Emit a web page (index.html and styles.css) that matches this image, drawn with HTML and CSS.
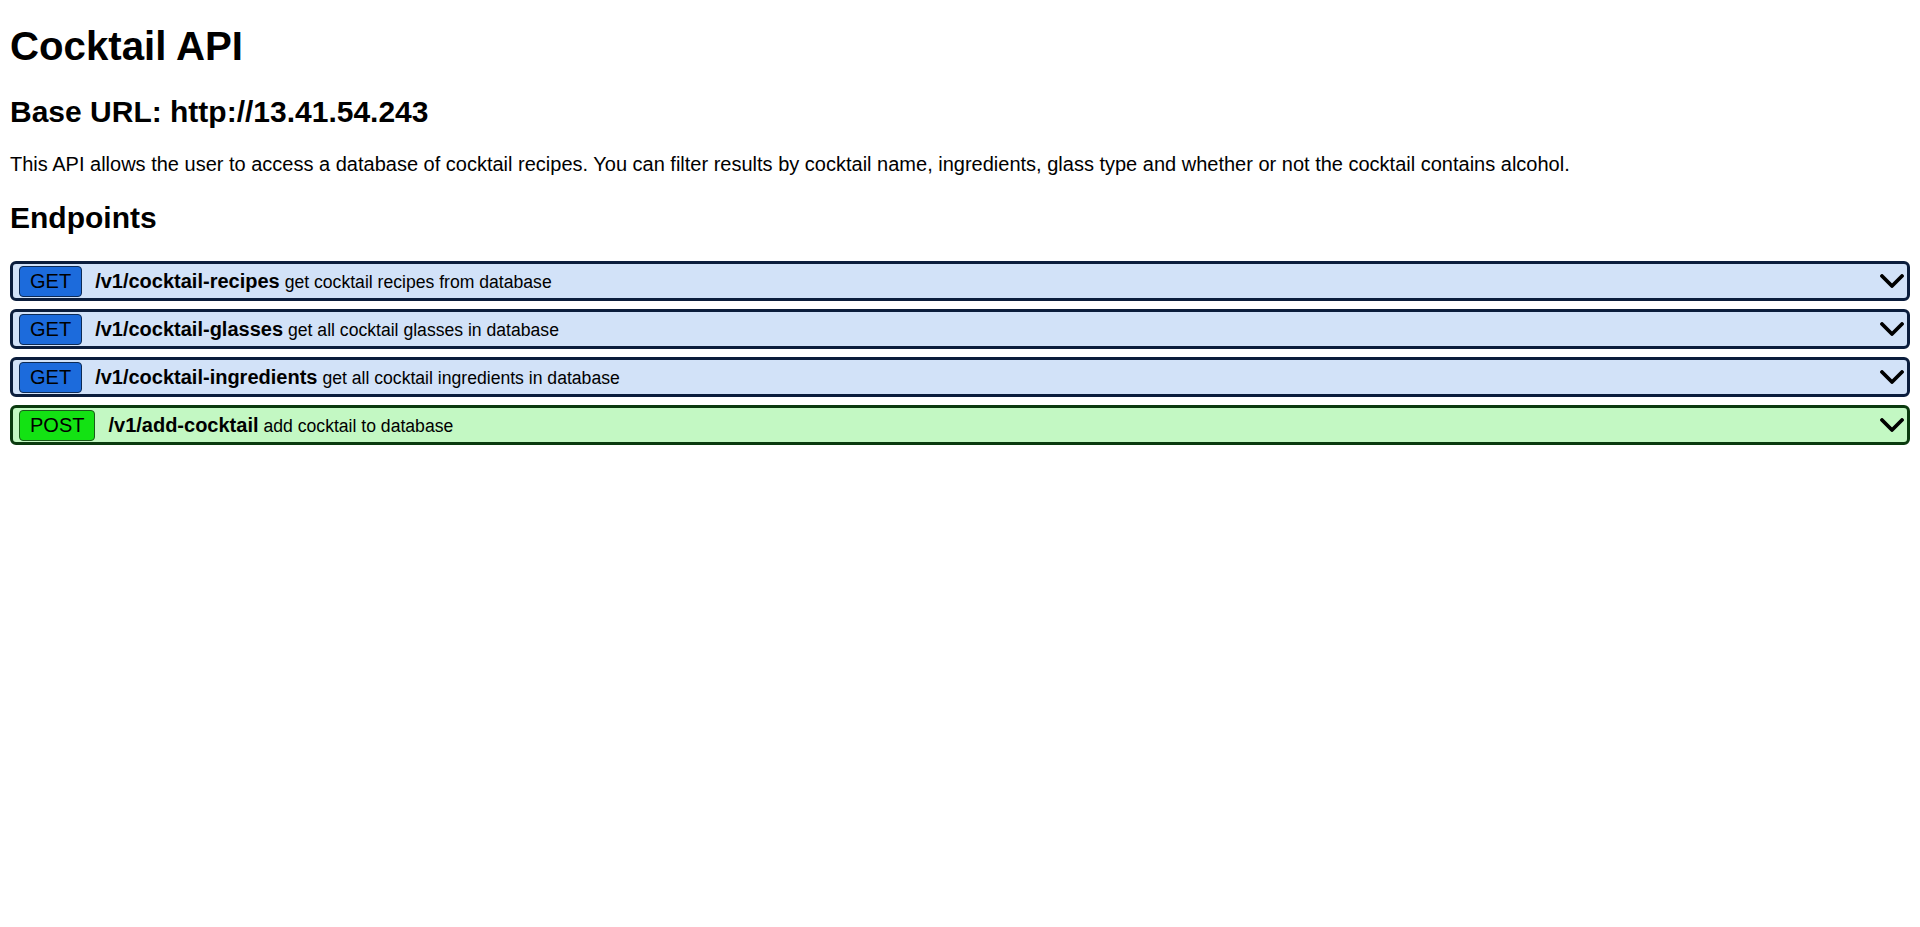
FILE: index.html
```html
<!DOCTYPE html>
<html lang="en">
<head>
<meta charset="utf-8">
<title>Cocktail API</title>
<link rel="stylesheet" href="styles.css">
</head>
<body>
  <h1 class="title">Cocktail API</h1>
  <h2 class="subtitle">Base URL: http://13.41.54.243</h2>
  <p class="intro">This API allows the user to access a database of cocktail recipes. You can filter results by cocktail name, ingredients, glass type and whether or not the cocktail contains alcohol.</p>
  <h2 class="section">Endpoints</h2>
  <div class="endpoints">
    <div class="endpoint endpoint-get">
      <span class="method method-get">GET</span>
      <span class="label"><span class="path">/v1/cocktail-recipes</span><span class="desc">get cocktail recipes from database</span></span>
      <svg class="chevron" viewBox="0 0 24 14" width="24" height="14"><polyline points="2,2 12,12 22,2"/></svg>
    </div>
    <div class="endpoint endpoint-get">
      <span class="method method-get">GET</span>
      <span class="label"><span class="path">/v1/cocktail-glasses</span><span class="desc">get all cocktail glasses in database</span></span>
      <svg class="chevron" viewBox="0 0 24 14" width="24" height="14"><polyline points="2,2 12,12 22,2"/></svg>
    </div>
    <div class="endpoint endpoint-get">
      <span class="method method-get">GET</span>
      <span class="label"><span class="path">/v1/cocktail-ingredients</span><span class="desc">get all cocktail ingredients in database</span></span>
      <svg class="chevron" viewBox="0 0 24 14" width="24" height="14"><polyline points="2,2 12,12 22,2"/></svg>
    </div>
    <div class="endpoint endpoint-post">
      <span class="method method-post">POST</span>
      <span class="label"><span class="path">/v1/add-cocktail</span><span class="desc">add cocktail to database</span></span>
      <svg class="chevron" viewBox="0 0 24 14" width="24" height="14"><polyline points="2,2 12,12 22,2"/></svg>
    </div>
  </div>
</body>
</html>
```
FILE: styles.css
```css
html, body {
  background: #ffffff;
}
body {
  margin: 0;
  padding: 24px 10px 0;
  font-family: "Liberation Sans", Arial, sans-serif;
  color: #000000;
}
.title {
  margin: 0;
  font-size: 40.2px;
  line-height: 45px;
  font-weight: bold;
}
.subtitle {
  margin: 26px 0 0;
  font-size: 30px;
  line-height: 34px;
  font-weight: bold;
}
.intro {
  margin: 24px 0 0;
  font-size: 20px;
  line-height: 23px;
}
.section {
  margin: 25px 0 0;
  font-size: 30px;
  line-height: 34px;
  font-weight: bold;
}
.endpoints {
  margin-top: 26px;
  display: flex;
  flex-direction: column;
  gap: 8px;
}
.endpoint {
  box-sizing: border-box;
  height: 40px;
  display: flex;
  align-items: center;
  padding: 0 3px 0 6px;
  border: 3px solid #0b1d3c;
  border-radius: 6px;
  background: #d2e2f8;
}
.endpoint-post {
  border-color: #0a3a0e;
  background: #c3f8c3;
}
.method {
  box-sizing: border-box;
  height: 31px;
  line-height: 29px;
  padding: 0 10px;
  border: 1px solid #0c2a55;
  border-radius: 4px;
  font-size: 20px;
  color: #000000;
}
.method-get {
  background: #1c6bdc;
}
.method-post {
  background: #13e213;
  border-color: #1a5a1a;
}
.label {
  margin-left: 13px;
  white-space: nowrap;
}
.path {
  font-size: 20px;
  font-weight: bold;
}
.desc {
  margin-left: 5px;
  font-size: 17.6px;
}
.chevron {
  margin-left: auto;
  display: block;
  fill: none;
  stroke: #000000;
  stroke-width: 3.8;
  stroke-linecap: round;
  stroke-linejoin: round;
}
```
